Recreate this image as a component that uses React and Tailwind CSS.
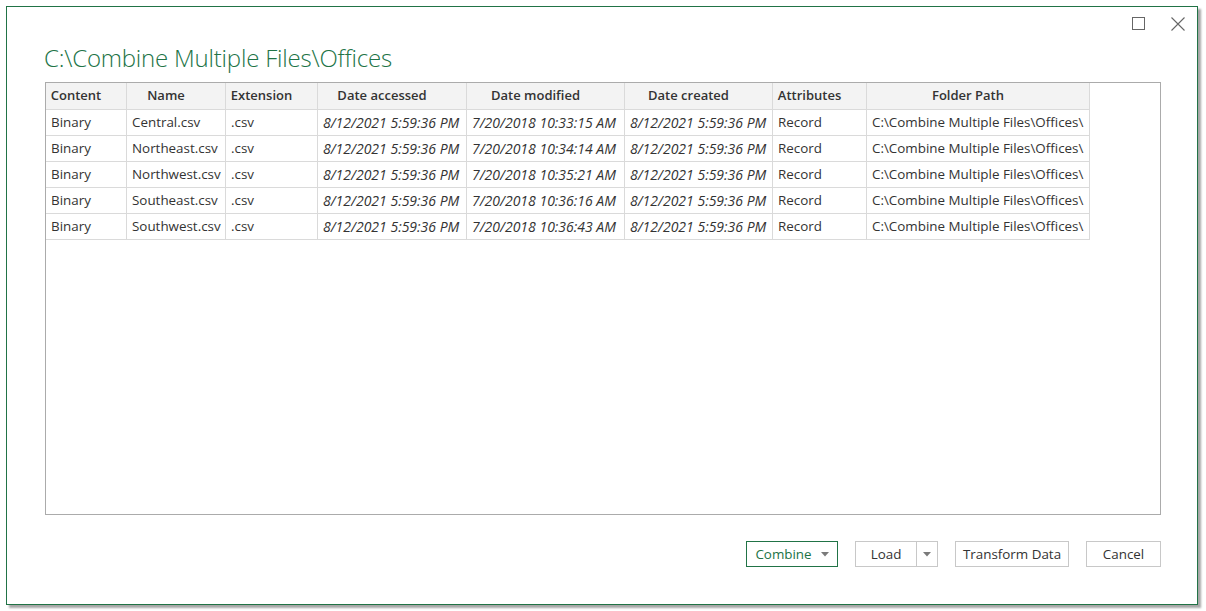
import React from "react";

const columns = [
  { key: "content", label: "Content", w: "w-[81px]" },
  { key: "name", label: "Name", w: "w-[99px]" },
  { key: "ext", label: "Extension", w: "w-[92px]" },
  { key: "accessed", label: "Date accessed", w: "w-[149px]", italic: true },
  { key: "modified", label: "Date modified", w: "w-[158px]", italic: true },
  { key: "created", label: "Date created", w: "w-[148px]", italic: true },
  { key: "attrs", label: "Attributes", w: "w-[94px]" },
  { key: "path", label: "Folder Path", w: "w-[223px]" },
];

const files = [
  ["Central.csv", "7/20/2018 10:33:15 AM"],
  ["Northeast.csv", "7/20/2018 10:34:14 AM"],
  ["Northwest.csv", "7/20/2018 10:35:21 AM"],
  ["Southeast.csv", "7/20/2018 10:36:16 AM"],
  ["Southwest.csv", "7/20/2018 10:36:43 AM"],
];

const rows = files.map(([name, modified]) => ({
  content: "Binary",
  name,
  ext: ".csv",
  accessed: "8/12/2021 5:59:36 PM",
  modified,
  created: "8/12/2021 5:59:36 PM",
  attrs: "Record",
  path: "C:\\Combine Multiple Files\\Offices\\",
}));

function Caret() {
  return (
    <svg width="8" height="5" viewBox="0 0 8 5" className="shrink-0">
      <path d="M0 0 H8 L4 4.5 Z" fill="#7a7a7a" />
    </svg>
  );
}

export default function App() {
  return (
    <div
      className="w-[1206px] h-[611px] bg-white p-[6px] text-[#333]"
      style={{ fontFamily: "'Open Sans', 'Noto Sans', sans-serif" }}
    >
      <div className="w-[1192px] h-[599px] border border-[#217346] bg-white shadow-[3px_3px_2px_rgba(0,0,0,0.35)] flex flex-col">
        {/* window controls */}
        <div className="flex justify-end items-start gap-[26px] pt-[10px] pr-[12px] h-[33px]">
          <div className="w-[13px] h-[13px] border border-[#666]" />
          <svg width="14" height="14" viewBox="0 0 14 14">
            <path d="M0.5 0.5 L13.5 13.5 M13.5 0.5 L0.5 13.5" stroke="#666" strokeWidth="1.1" />
          </svg>
        </div>

        {/* title */}
        <div className="pl-[37px] h-[42px] text-[24px] font-light leading-[36px] text-[#217346] tracking-[-0.2px]">
          C:\Combine Multiple Files\Offices
        </div>

        {/* table */}
        <div className="ml-[38px] w-[1116px] h-[433px] border border-[#ababab] overflow-hidden">
          <div className="flex w-fit h-[27px] bg-[#f3f3f3] border-b border-[#dadada]">
            {columns.map((c) => (
              <div
                key={c.key}
                className={`${c.w} shrink-0 border-r border-[#dadada] flex items-center justify-center pl-[4px] pr-[24px] text-[13px] font-semibold whitespace-nowrap`}
              >
                {c.label}
              </div>
            ))}
          </div>
          {rows.map((r, i) => (
            <div key={i} className="flex h-[26px]">
              {columns.map((c) => (
                <div
                  key={c.key}
                  className={`${c.w} shrink-0 border-r border-b border-[#dadada] flex items-center pl-[5px] whitespace-nowrap overflow-hidden ${c.italic ? "italic text-[14px]" : "text-[13.4px]"}`}
                >
                  {r[c.key]}
                </div>
              ))}
            </div>
          ))}
        </div>

        {/* buttons */}
        <div className="flex justify-end gap-[17px] pr-[36px] pt-[26px] text-[13.4px]">
          <button className="w-[92px] h-[26px] border border-[#217346] text-[#217346] flex items-center justify-center gap-[9px]">
            <span>Combine</span>
            <Caret />
          </button>
          <div className="flex h-[26px] border border-[#c8c8c8]">
            <button className="w-[61px] h-full border-r border-[#c8c8c8] flex items-center justify-center">
              Load
            </button>
            <button className="w-[20px] h-full flex items-center justify-center">
              <Caret />
            </button>
          </div>
          <button className="w-[114px] h-[26px] border border-[#c8c8c8] flex items-center justify-center">
            Transform Data
          </button>
          <button className="w-[75px] h-[26px] border border-[#c8c8c8] flex items-center justify-center">
            Cancel
          </button>
        </div>
      </div>
    </div>
  );
}
